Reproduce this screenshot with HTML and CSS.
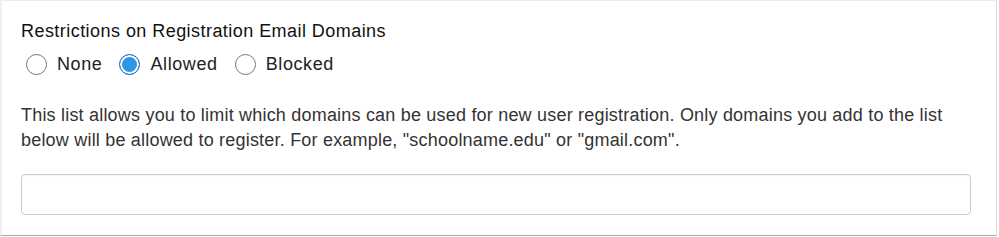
FILE: index.html
```html
<!DOCTYPE html>
<html lang="en">
  <head>
    <meta charset="UTF-8" />
    <meta name="viewport" content="width=device-width, initial-scale=1.0" />
    <title>Registration Email Domains</title>
    <link rel="stylesheet" href="styles.css">
  </head>
  <body>
    <div class="panel">
      <fieldset class="restrictions">
        <legend class="title">Restrictions on Registration Email Domains</legend>
        <div class="options">
          <label class="option">
            <input type="radio" name="restriction" value="none" />
            <span class="dot"></span>
            None
          </label>
          <label class="option">
            <input type="radio" name="restriction" value="allowed" checked />
            <span class="dot"></span>
            Allowed
          </label>
          <label class="option">
            <input type="radio" name="restriction" value="blocked" />
            <span class="dot"></span>
            Blocked
          </label>
        </div>
      </fieldset>

      <p class="help">
        This list allows you to limit which domains can be used for new user registration. Only domains you add to the list below will be allowed to register. For example, "schoolname.edu" or "gmail.com".
      </p>

      <input type="text" class="domains" name="domains" />
    </div>
  </body>
</html>
```

FILE: styles.css
```css
body {
  font-family: "Liberation Sans", Arial, sans-serif;
  background-color: #fff;
  color: #333;
  margin: 0;
  padding: 0;
}

.panel {
  width: 997px;
  height: 236px;
  box-sizing: border-box;
  border-top: 1px solid #ececec;
  border-left: 2px solid #f0f0f0;
  border-right: 1px solid #dcdcdc;
  border-bottom: 1px solid #a9a9a9;
  padding: 19px 25px 0 19px;
}

.restrictions {
  border: none;
  margin: 0;
  padding: 0;
}

.title {
  padding: 0;
  font-size: 18px;
  letter-spacing: 0.45px;
  line-height: 22px;
  color: #111;
}

.options {
  display: flex;
  gap: 17px;
  margin-top: 10px;
  padding-left: 5px;
}

.option {
  display: flex;
  align-items: center;
  gap: 10px;
  height: 24px;
  font-size: 18px;
  letter-spacing: 0.6px;
  line-height: 22px;
  color: #222;
}

.option input {
  display: none;
}

.dot {
  width: 21px;
  height: 21px;
  box-sizing: border-box;
  border: 1.5px solid #6b7883;
  border-radius: 50%;
  background: #fff;
}

.option input:checked + .dot {
  border-color: #1c6ec4;
  background: #2f95e6;
  box-shadow: inset 0 0 0 2px #fff;
}

.help {
  margin: 27px 0 0;
  font-size: 18px;
  letter-spacing: 0.2px;
  line-height: 25px;
  color: #333;
}

.domains {
  display: block;
  width: 950px;
  height: 41px;
  margin-top: 21px;
  box-sizing: border-box;
  border: 1px solid #cbcbcb;
  border-radius: 4px;
  box-shadow: inset 0 1px 1px rgba(0, 0, 0, 0.05);
}
```
